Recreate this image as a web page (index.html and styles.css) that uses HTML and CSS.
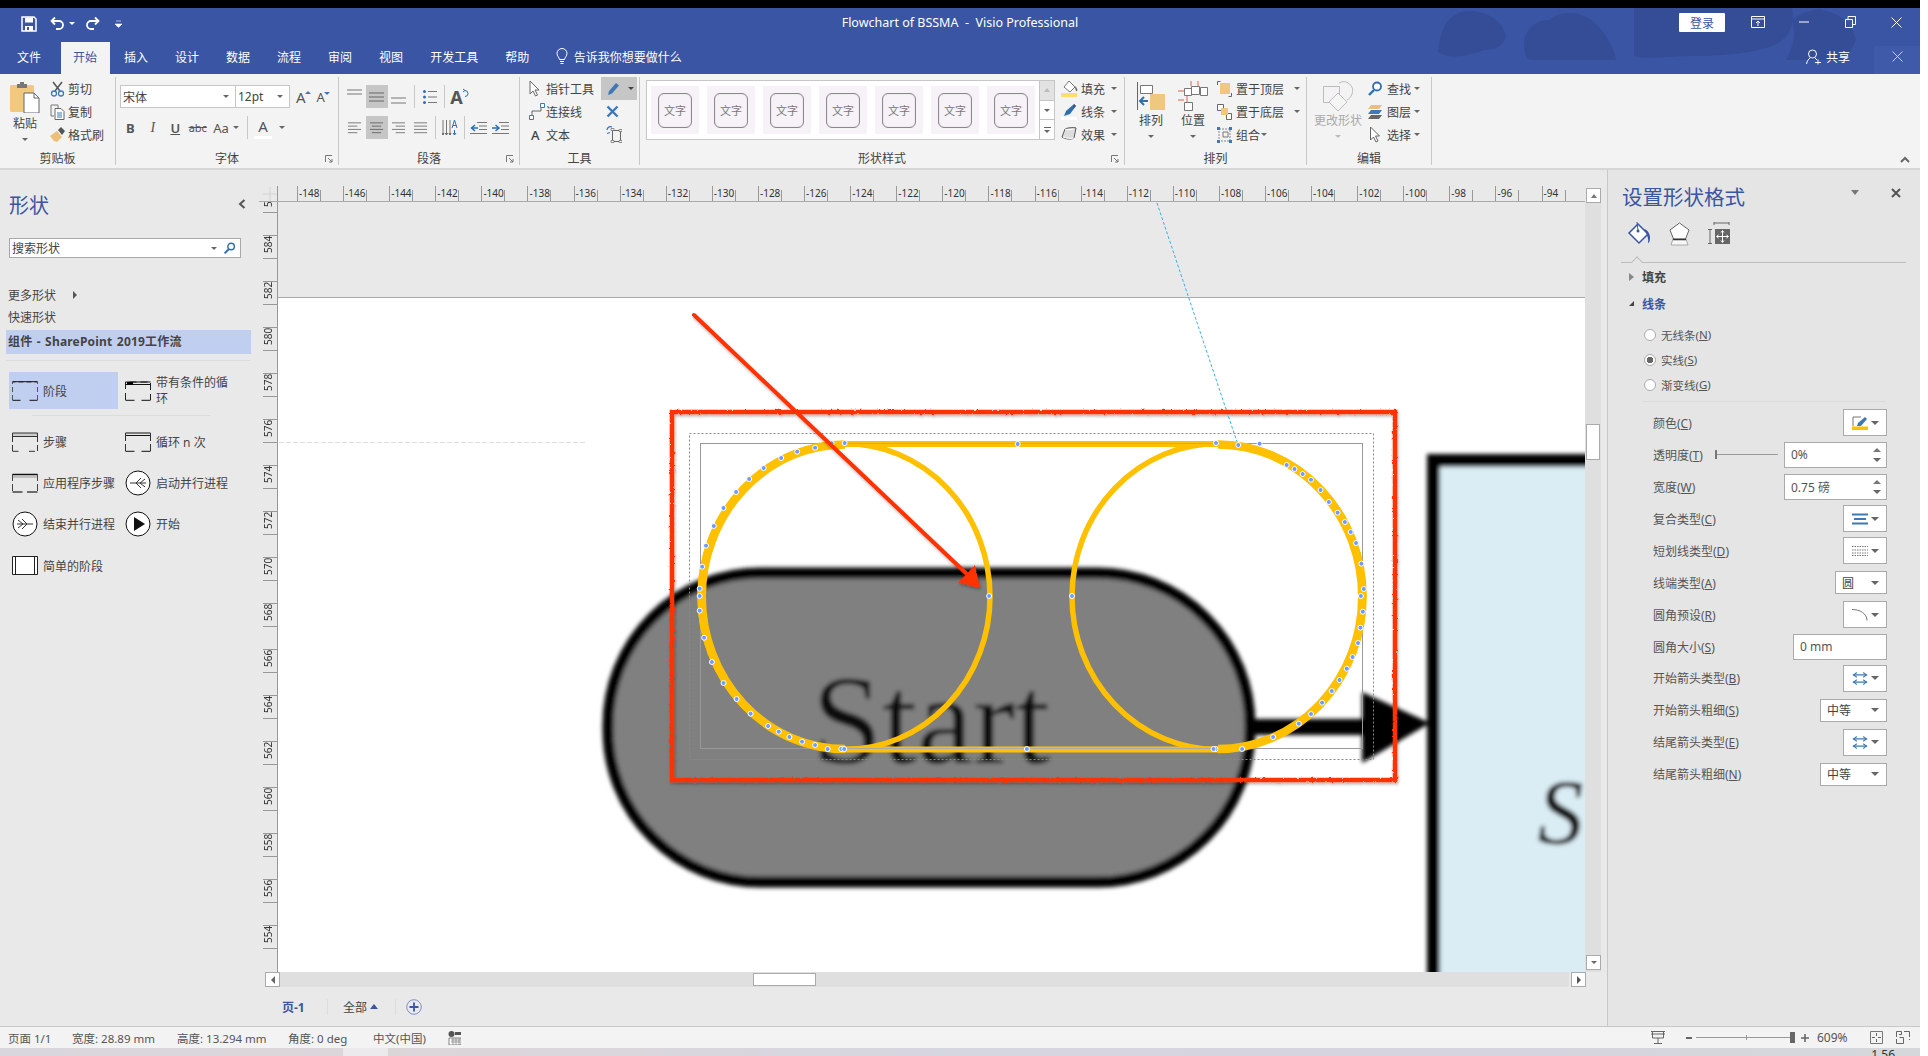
FILE: index.html
```html
<!DOCTYPE html>
<html lang="zh-CN">
<head>
    <meta charset="UTF-8">
    <title>Flowchart of BSSMA - Visio Professional</title>
    <link rel="stylesheet" href="styles.css">
</head>
<body>
<svg class="defs" width="0" height="0">
    <defs>
        <symbol id="al-left" viewBox="0 0 16 14"><path d="M1 1.500h14M1 5h10M1 8.500h14M1 12h10" stroke="#777" fill="none"/></symbol>
        <symbol id="al-center" viewBox="0 0 16 14"><path d="M1 1.500h14M3 5h10M1 8.500h14M3 12h10" stroke="#666" fill="none"/></symbol>
        <symbol id="al-right" viewBox="0 0 16 14"><path d="M1 1.500h14M5 5h10M1 8.500h14M5 12h10" stroke="#777" fill="none"/></symbol>
        <symbol id="al-just" viewBox="0 0 16 14"><path d="M1 1.500h14M1 5h14M1 8.500h14M1 12h14" stroke="#777" fill="none"/></symbol>
        <symbol id="swap" viewBox="0 0 20 18"><path d="M1 4.500h18M1 13.500h18" stroke="#3f78b5" stroke-width="1.400" fill="none"/><path d="M14 1.500l4 3-4 3M6 1.500l-4 3 4 3M14 10.500l4 3-4 3M6 10.500l-4 3 4 3" stroke="#3f78b5" stroke-width="1.400" fill="none"/></symbol>
        <symbol id="stage" viewBox="0 0 26 20"><path d="M.5 19V1h25v18" fill="none" stroke="#555" stroke-dasharray="5 3"/><path d="M.5 .7h25M.5 19.300h8M17.500 19.300h8" stroke="#111" fill="none"/></symbol>
    </defs>
</svg>

<div class="window">
    <div class="topline"></div>
    <header class="app-head">
        <svg class="clouds" width="440" height="52" viewBox="0 0 440 52">
            <path d="M0 44C2 30 4 10 24 4c18-4 40 6 44 24-2 10-10 14-22 14C30 48 12 52 0 44z"/>
            <path d="M86 38c0-14 8-26 26-26 6-8 30-12 46 4 10 10 18 24 20 36H92c-6-4-6-10-6-14z"/>
            <path d="M196 0h158c2 14 0 28-16 36-20 10-60 12-82 12-24 0-50 4-60 0 0-20 0-30 0-48z"/>
            <path d="M354 12c8-6 22-12 30-10 20 4 30 14 34 30l-10 20h-60c8-14 10-28 6-40z"/>
        </svg>
        <div class="titlebar">
            <div class="qat">
                <svg width="16" height="16" viewBox="0 0 16 16"><path d="M1 1h12l2 2v12H1z" fill="none" stroke="#fff" stroke-width="1.500"/><path d="M4 1.500h8v5H4zM4 10h8v5H4z" fill="#fff"/><path d="M6 11h2v3H6z" fill="#3955a3"/></svg>
                <svg class="qat-undo" width="15" height="15" viewBox="0 0 15 15"><path d="M2 5h7a4 4 0 0 1 0 8H6M5 1.500L1.500 5 5 8.500" fill="none" stroke="#fff" stroke-width="1.800"/></svg>
                <i class="caret white"></i>
                <svg class="qat-redo" width="15" height="15" viewBox="0 0 15 15"><path d="M13 5H6a4 4 0 0 0 0 8h3M10 1.500L13.500 5 10 8.500" fill="none" stroke="#fff" stroke-width="1.800"/></svg>
                <svg class="qat-more" width="7" height="8" viewBox="0 0 7 8"><path d="M1 1h5M0 4h7l-3.500 3.500z" fill="#fff" stroke="#fff" stroke-width=".6"/></svg>
            </div>
            <div class="doc-title">Flowchart of BSSMA&nbsp; - &nbsp;Visio Professional</div>
            <div class="win-ctrls">
                <button class="login">登录</button>
                <svg class="wc ctl-a" width="14" height="12" viewBox="0 0 14 12"><path d="M.5.500h13v11H.5zM.5 3h13M7 10V5M5 7l2-2 2 2" fill="none" stroke="#fff"/></svg>
                <svg class="wc ctl-b" width="10" height="2" viewBox="0 0 10 2"><path d="M0 1h10" stroke="#fff"/></svg>
                <svg class="wc ctl-c" width="11" height="12" viewBox="0 0 11 12"><path d="M.5 3.500h7v8h-7zM3 3V.500h7.500v8H8" fill="none" stroke="#fff"/></svg>
                <svg class="wc ctl-d" width="11" height="11" viewBox="0 0 11 11"><path d="M.5.500l10 10M10.500.500l-10 10" stroke="#fff"/></svg>
            </div>
        </div>
        <nav class="tabs">
            <span class="tab first">文件</span>
            <span class="tab active">开始</span>
            <span class="tab">插入</span>
            <span class="tab">设计</span>
            <span class="tab">数据</span>
            <span class="tab">流程</span>
            <span class="tab">审阅</span>
            <span class="tab">视图</span>
            <span class="tab">开发工具</span>
            <span class="tab">帮助</span>
            <span class="tell-me">
                <svg width="12" height="17" viewBox="0 0 12 17"><path d="M3.500 11.500C3 9 1 8 1 5.500a5 5 0 0 1 10 0c0 2.500-2 3.500-2.500 6zM4 13.500h4M4.500 15.500h3" fill="none" stroke="#fff"/></svg>
                告诉我你想要做什么
            </span>
            <span class="share">
                <svg width="15" height="16" viewBox="0 0 15 16"><circle cx="6.500" cy="5" r="4" fill="none" stroke="#fff"/><path d="M.5 15c.5-3 2-5 3.500-6M9 9l2 2M9 13.500h6M12 10.500v5" fill="none" stroke="#fff"/></svg>
                共享
            </span>
            <span class="pane-close"><svg width="11" height="11" viewBox="0 0 11 11"><path d="M.5.500l10 10M10.500.500l-10 10" stroke="#c9d0e3"/></svg></span>
        </nav>
    </header>

    <section class="ribbon">
        <div class="group g-clip">
            <div class="group-body">
                <div class="big big-paste">
                    <svg width="30" height="32" viewBox="0 0 30 32"><rect x="0" y="4" width="24" height="27" rx="1.500" fill="#f0c87e"/><path d="M7 3h10v4H7z" fill="#777"/><path d="M10 1h4v3h-4z" fill="#777"/><path d="M14 12h10l5 5v15H14z" fill="#fff" stroke="#666"/><path d="M24 12v5h5" fill="none" stroke="#666"/></svg>
                    <span>粘贴</span>
                    <i class="caret"></i>
                </div>
                <div class="col col-clip">
                    <div class="tool"><svg width="15" height="16" viewBox="0 0 15 16"><path d="M3 1l7 9M12 1l-7 9" stroke="#555" stroke-width="1.500"/><circle cx="4" cy="12.500" r="2.500" fill="none" stroke="#3f78b5" stroke-width="1.300"/><circle cx="11" cy="12.500" r="2.500" fill="none" stroke="#3f78b5" stroke-width="1.300"/></svg><span>剪切</span></div>
                    <div class="tool"><svg width="15" height="16" viewBox="0 0 15 16"><path d="M1 1h7l0 3M1 1v11h3" fill="none" stroke="#777"/><path d="M5 4.500h6l3 3v8H5z" fill="#fff" stroke="#666"/><path d="M7 9h5M7 11h5M7 13h5" stroke="#3f78b5"/></svg><span>复制</span></div>
                    <div class="tool"><svg width="15" height="16" viewBox="0 0 15 16"><path d="M0 9l7-5 5 6-5 5-3-1z" fill="#ecc078"/><path d="M8 3l3-3 4 4-3 4z" fill="#555"/></svg><span>格式刷</span></div>
                </div>
            </div>
            <div class="group-label">剪贴板</div>
        </div>

        <div class="group g-font">
            <div class="group-body stack">
                <div class="font-row">
                    <div class="combo font-name"><span>宋体</span><i class="caret"></i></div>
                    <div class="combo font-size"><span>12pt</span><i class="caret"></i></div>
                    <span class="grow-a up">A</span>
                    <span class="grow-a down">A</span>
                </div>
                <div class="font-row second">
                    <span class="tb bold">B</span>
                    <span class="tb ital">I</span>
                    <span class="tb und">U</span>
                    <span class="tb strike">abc</span>
                    <span class="tb case">Aa</span><i class="caret"></i>
                    <span class="vsep sep-font"></span>
                    <span class="font-color">A</span><i class="caret"></i>
                </div>
            </div>
            <div class="group-label">字体</div>
            <svg class="launcher" width="8" height="8" viewBox="0 0 8 8"><path d="M.5 7V.500H7M3 3l4 4M7 4v3H4" fill="none" stroke="#777"/></svg>
        </div>

        <div class="group g-para">
            <div class="group-body stack">
                <div class="para-row">
                    <span class="pb"><svg width="15" height="8" viewBox="0 0 15 8" class="nudge-up"><path d="M0 1h15M0 5h15" stroke="#777"/></svg></span>
                    <span class="pb on"><svg width="15" height="10" viewBox="0 0 15 10"><path d="M0 1h15M0 5h15M0 9h15" stroke="#666"/></svg></span>
                    <span class="pb"><svg width="15" height="8" viewBox="0 0 15 8" class="nudge-down"><path d="M0 1h15M0 6h15" stroke="#777"/></svg></span>
                    <span class="vsep"></span>
                    <span class="pb gap-s"><svg width="14" height="16" viewBox="0 0 14 16"><path d="M5 2.500h9M5 8h9M5 13.500h9" stroke="#777"/><circle cx="1.500" cy="2.500" r="1.500" fill="#2f6fb0"/><circle cx="1.500" cy="8" r="1.500" fill="#2f6fb0"/><circle cx="1.500" cy="13.500" r="1.500" fill="#2f6fb0"/></svg></span>
                    <span class="vsep"></span>
                    <span class="pb gap-s rot-a">A<svg width="7" height="10" viewBox="0 0 7 10"><path d="M1 1l2 1.500L1 4M3 2.500a3 3 0 0 1 0 6" fill="none" stroke="#2f6fb0"/></svg></span>
                </div>
                <div class="para-row second">
                    <span class="pb"><svg width="15" height="14"><use href="#al-left"/></svg></span>
                    <span class="pb on"><svg width="15" height="14"><use href="#al-center"/></svg></span>
                    <span class="pb"><svg width="15" height="14"><use href="#al-right"/></svg></span>
                    <span class="pb"><svg width="15" height="14"><use href="#al-just"/></svg></span>
                    <span class="vsep"></span>
                    <span class="pb"><svg width="16" height="18" viewBox="0 0 16 18"><path d="M1 1v14M4.500 1v14M8 1v14" stroke="#777"/><path d="M0 14l1 2 1-2M3.500 14l1 2 1-2M7 14l1 2 1-2" stroke="#555" fill="none"/><path d="M10 9l2.500-8L15 9M11 6.500h3M12.500 11v5M11 14l1.500 2 1.500-2" fill="none" stroke="#2f6fb0"/></svg></span>
                    <span class="vsep"></span>
                    <span class="pb"><svg width="17" height="14" viewBox="0 0 17 14"><path d="M7 1.500h10M9 5h8M9 8.500h8M0 12.500h17" stroke="#777"/><path d="M8 7H2M5 4L1.500 7 5 10" fill="none" stroke="#2f6fb0" stroke-width="1.500"/></svg></span>
                    <span class="pb"><svg width="17" height="14" viewBox="0 0 17 14"><path d="M7 1.500h10M9 5h8M9 8.500h8M0 12.500h17" stroke="#777"/><path d="M0 7h6M3.500 4L7 7l-3.500 3" fill="none" stroke="#2f6fb0" stroke-width="1.500"/></svg></span>
                </div>
            </div>
            <div class="group-label">段落</div>
            <svg class="launcher" width="8" height="8" viewBox="0 0 8 8"><path d="M.5 7V.500H7M3 3l4 4M7 4v3H4" fill="none" stroke="#777"/></svg>
        </div>

        <div class="group g-tools">
            <div class="group-body tools-grid">
                <div class="tool tool-w"><svg width="11" height="17" viewBox="0 0 11 17"><path d="M1 1v13l3-3 2.500 5 2-1-2.500-5h4z" fill="#fff" stroke="#666"/></svg><span>指针工具</span></div>
                <div class="pen-btn"><svg width="13" height="14" viewBox="0 0 13 14"><path d="M1 13l1-4 7-8 3 2.500-7 8z" fill="#3f78b5"/></svg><i class="caret dark"></i></div>
                <div class="tool tool-w"><svg width="16" height="17" viewBox="0 0 16 17"><path d="M3 12V8h9V4" fill="none" stroke="#666"/><path d="M.5 12.500h4v4h-4zM11.500.500h4v4h-4z" fill="#fff" stroke="#3f78b5"/></svg><span>连接线</span></div>
                <div class="mini"><svg width="13" height="13" viewBox="0 0 13 13"><path d="M1.500 1.500l10 10M11.500 1.500l-10 10" stroke="#3f78b5" stroke-width="2.400"/></svg></div>
                <div class="tool tool-w"><span class="text-a">A</span><span>文本</span></div>
                <div class="mini"><svg width="16" height="17" viewBox="0 0 16 17"><path d="M6.500 4.500h8v11h-8z" fill="none" stroke="#666"/><path d="M5 4.500h3v-2H5zM13 3.500h3v2h-3zM5 14.500h3v2H5zM13 14.500h3v2h-3z" fill="#fff" stroke="#666" stroke-width=".7"/><path d="M1 4a3.500 3.500 0 0 1 5-3M6 1L4 .3M1 7.500l3-1" fill="none" stroke="#3f78b5" stroke-width="1.300"/></svg></div>
            </div>
            <div class="group-label">工具</div>
        </div>

        <div class="group g-style">
            <div class="group-body">
                <div class="gallery">
                    <div class="tiles">
                        <div class="tile"><b>文字</b></div>
                        <div class="tile"><b>文字</b></div>
                        <div class="tile"><b>文字</b></div>
                        <div class="tile"><b>文字</b></div>
                        <div class="tile"><b>文字</b></div>
                        <div class="tile"><b>文字</b></div>
                        <div class="tile"><b>文字</b></div>
                    </div>
                    <div class="gal-scroll">
                        <span class="off"><i class="caret up-c"></i></span>
                        <span><i class="caret"></i></span>
                        <span class="last"><i class="bar"></i><i class="caret"></i></span>
                    </div>
                </div>
                <div class="col col-style">
                    <div class="tool"><svg width="17" height="17" viewBox="0 0 17 17"><path d="M8 1l6 6-5 5-6-5z" fill="#fff" stroke="#777"/><path d="M14 6c2 2 3 4 2 5s-2-2-2-5z" fill="#666"/><path d="M0 13h16v4H0z" fill="#fedc6e"/></svg><span>填充</span><i class="caret"></i></div>
                    <div class="tool"><svg width="17" height="17" viewBox="0 0 17 17"><path d="M3 13l2-5 8-7 2 2-6 8z" fill="#2f6fb0"/><path d="M13 1l2 2-3 3z" fill="#555"/><path d="M0 14h16v3H0z" fill="#fff"/></svg><span>线条</span><i class="caret"></i></div>
                    <div class="tool"><svg width="17" height="17" viewBox="0 0 17 17"><path d="M1 11l3-8c1-1 9-2 11-1l-2 10c-3 2-9 1-12-1z" fill="#ddd" stroke="#555"/><path d="M4 3c2 1 6 1 8 0M2 11c3 1 7 2 11 1" fill="none" stroke="#fff"/></svg><span>效果</span><i class="caret"></i></div>
                </div>
            </div>
            <div class="group-label">形状样式</div>
            <svg class="launcher" width="8" height="8" viewBox="0 0 8 8"><path d="M.5 7V.500H7M3 3l4 4M7 4v3H4" fill="none" stroke="#777"/></svg>
        </div>

        <div class="group g-arrange">
            <div class="group-body">
                <div class="big big-order">
                    <svg width="28" height="30" viewBox="0 0 28 30"><path d="M.5 1v28" stroke="#666"/><path d="M3.500 4.500h12v8h-12z" fill="#fff" stroke="#777"/><path d="M13 13h15v16H13z" fill="#efc77f"/><path d="M11 20H4M7 16l-4 4 4 4" fill="none" stroke="#2f6fb0" stroke-width="2"/></svg>
                    <span>排列</span>
                    <i class="caret"></i>
                </div>
                <div class="big big-place">
                    <svg width="30" height="30" viewBox="0 0 30 30"><path d="M13.500 5.500h8v8h-8zM22.500 6.500h7v8h-7zM6.500 7.500h7v7h-7zM6.500 21.500h8v8h-8z" fill="#fff" stroke="#777"/><path d="M13 0v5M20 0v5M0 10h6M0 19h6M9 15v6" stroke="#d9664a"/></svg>
                    <span>位置</span>
                    <i class="caret"></i>
                </div>
                <div class="col col-arrange">
                    <div class="tool"><svg width="15" height="16" viewBox="0 0 15 16"><path d="M.5 4V.500h3M14.500 12v3.500h-3" fill="none" stroke="#666"/><path d="M3 2h10v11H3z" fill="#efc77f"/></svg><span>置于顶层</span><i class="caret"></i></div>
                    <div class="tool"><svg width="15" height="16" viewBox="0 0 15 16"><path d="M.5.500h6v6h-6zM9.500 9.500h5v6h-5z" fill="#fff" stroke="#666"/><path d="M4 4h7v7H4z" fill="#efc77f"/></svg><span>置于底层</span><i class="caret"></i></div>
                    <div class="tool t-group"><svg width="15" height="16" viewBox="0 0 15 16"><path d="M2 2h11v12H2z" fill="none" stroke="#888" stroke-dasharray="2 1"/><path d="M6 5h5v5H6z" fill="none" stroke="#777"/><path d="M0 0h3v3H0zM12 0h3v3h-3zM0 13h3v3H0zM12 13h3v3h-3z" fill="#3f78b5"/></svg><span>组合</span><i class="caret"></i></div>
                </div>
            </div>
            <div class="group-label">排列</div>
        </div>

        <div class="group g-edit">
            <div class="group-body">
                <div class="big big-change">
                    <svg width="30" height="30" viewBox="0 0 30 30"><path d="M.5 5.500h16v16H.5z" fill="#f5f2f5" stroke="#bbb"/><path d="M16 2a9 9 0 0 1 13 11c-1 3-3 5-5 6" fill="none" stroke="#bbb"/><path d="M15 12l9 9-9 9-9-9z" fill="#f5f5f5" stroke="#bbb"/></svg>
                    <span>更改形状</span>
                    <i class="caret pale"></i>
                </div>
                <div class="col col-edit">
                    <div class="tool"><svg width="14" height="16" viewBox="0 0 14 16"><circle cx="9" cy="5.500" r="4" fill="#fff" stroke="#2f6fb0" stroke-width="1.800"/><path d="M6 9l-5 5" stroke="#2f6fb0" stroke-width="2.400"/></svg><span>查找</span><i class="caret"></i></div>
                    <div class="tool"><svg width="14" height="16" viewBox="0 0 14 16"><path d="M3 1h11l-3 4H0z" fill="#e9c07a"/><path d="M3 6h11l-3 4H0z" fill="#3f78b5"/><path d="M3 11h11l-3 4H0z" fill="#666"/></svg><span>图层</span><i class="caret"></i></div>
                    <div class="tool"><svg width="14" height="17" viewBox="0 0 11 17"><path d="M1 1v13l3-3 2.500 5 2-1-2.500-5h4z" fill="#fff" stroke="#666"/></svg><span>选择</span><i class="caret"></i></div>
                </div>
            </div>
            <div class="group-label">编辑</div>
        </div>

        <svg class="collapse" width="10" height="7" viewBox="0 0 10 7"><path d="M1 6l4-4 4 4" fill="none" stroke="#666" stroke-width="2"/></svg>
    </section>

    <main class="main">
        <aside class="shapes">
            <div class="shapes-head">
                <h2>形状</h2>
                <svg width="8" height="10" viewBox="0 0 8 10"><path d="M6.500 1L2 5l4.500 4" fill="none" stroke="#555" stroke-width="2"/></svg>
            </div>
            <div class="search">
                <span>搜索形状</span>
                <i class="caret"></i>
                <svg width="13" height="13" viewBox="0 0 14 16"><circle cx="9" cy="5.500" r="4" fill="#fff" stroke="#2f6fb0" stroke-width="1.800"/><path d="M6 9l-5 5" stroke="#2f6fb0" stroke-width="2.400"/></svg>
            </div>
            <div class="more">更多形状<i class="arrow-r"></i></div>
            <div class="quick">快速形状</div>
            <div class="stencil">组件 - SharePoint 2019工作流</div>
            <div class="rule"></div>
            <div class="masters first-row">
                <div class="master selected"><svg width="26" height="20"><use href="#stage"/></svg><span>阶段</span></div>
                <div class="master"><svg width="26" height="20" viewBox="0 0 26 20"><path d="M.5 19V1h25v18" fill="none" stroke="#222" stroke-dasharray="7 4"/><path d="M.5 1h25M.5 3.500h25M.5 19.300h9M16.500 19.300h9" stroke="#111" fill="none"/><path d="M2 1h6v2.500H2z"/></svg><span class="two-line">带有条件的循环</span></div>
            </div>
            <div class="rule short"></div>
            <div class="masters">
                <div class="master"><svg width="26" height="20" viewBox="0 0 26 20"><path d="M.5 1h25v3.500H.5z" fill="#ccc" stroke="#333"/><path d="M.5 4v15M25.500 4v15M.5 19.300h8M17 19.300h8.500" fill="none" stroke="#333" stroke-dasharray="6 3"/></svg><span>步骤</span></div>
                <div class="master"><svg width="26" height="20" viewBox="0 0 26 20"><path d="M.5 1h25M.5 3.500h25" stroke="#111"/><path d="M.5 1v18M25.500 1v18" stroke="#333" stroke-dasharray="8 3"/><path d="M.5 19.300h9M16.500 19.300h9" stroke="#111"/></svg><span>循环 n 次</span></div>
                <div class="master"><svg width="26" height="20" viewBox="0 0 26 20"><path d="M.5 1.500h25" stroke="#111" stroke-width="1.500"/><path d="M.5 4h25" stroke="#999"/><path d="M.5 1v18M25.500 1v18" stroke="#444" stroke-dasharray="7 3"/><path d="M.5 19h10M15 19h10.500" stroke="#444" stroke-width="1.500"/></svg><span>应用程序步骤</span></div>
                <div class="master"><svg width="26" height="26" viewBox="0 0 26 26"><circle cx="13" cy="13" r="12" fill="#fff" stroke="#111"/><path d="M5 13h16M11 13l5-5M11 13l5 5M15 13l5-4M15 13l5 4" stroke="#333" fill="none"/></svg><span>启动并行进程</span></div>
                <div class="master"><svg width="26" height="26" viewBox="0 0 26 26"><circle cx="13" cy="13" r="12" fill="#fff" stroke="#111"/><path d="M5 13h16M15 13l-5-5M15 13l-5 5M11 13l-5-4M11 13l-5 4" stroke="#333" fill="none"/></svg><span>结束并行进程</span></div>
                <div class="master"><svg width="26" height="26" viewBox="0 0 26 26"><circle cx="13" cy="13" r="12" fill="#fff" stroke="#111"/><path d="M9 6l11 7-11 7z" fill="#111"/></svg><span>开始</span></div>
                <div class="master"><svg width="26" height="20" viewBox="0 0 26 20"><path d="M.5.500h25v18H.5z" fill="#fff" stroke="#222"/><path d="M3.500.500v18M22.500.500v18" stroke="#222" fill="none"/></svg><span>简单的阶段</span></div>
            </div>
        </aside>

        <section class="workarea">
            <div class="top-gap"></div>
            <div class="ruler-corner"><svg width="16" height="16" viewBox="0 0 16 16"><path d="M8 1v14M1 8h14" stroke="#d4d4d4"/></svg></div>
            <div class="h-ruler">
                <span>-148</span><span>-146</span><span>-144</span><span>-142</span><span>-140</span><span>-138</span><span>-136</span>
                <span>-134</span><span>-132</span><span>-130</span><span>-128</span><span>-126</span><span>-124</span><span>-122</span>
                <span>-120</span><span>-118</span><span>-116</span><span>-114</span><span>-112</span><span>-110</span><span>-108</span>
                <span>-106</span><span>-104</span><span>-102</span><span>-100</span><span>-98</span><span>-96</span><span>-94</span>
            </div>
            <div class="v-scroll">
                <span class="sb-btn"><i class="caret up-c"></i></span>
                <span class="v-thumb"></span>
                <span class="sb-btn"><i class="caret"></i></span>
            </div>
            <div class="v-ruler">
                <span><b>586</b></span><span><b>584</b></span><span><b>582</b></span><span><b>580</b></span><span><b>578</b></span><span><b>576</b></span>
                <span><b>574</b></span><span><b>572</b></span><span><b>570</b></span><span><b>568</b></span><span><b>566</b></span><span><b>564</b></span>
                <span><b>562</b></span><span><b>560</b></span><span><b>558</b></span><span><b>556</b></span><span><b>554</b></span>
            </div>
            <div class="canvas">
                <svg width="1307" height="770" viewBox="278 202 1307 770">
                    <defs>
                        <filter id="soft" x="-5%" y="-5%" width="110%" height="110%"><feGaussianBlur stdDeviation="2.300"/></filter>
                        <filter id="rough" x="-5%" y="-5%" width="110%" height="110%">
                            <feTurbulence type="fractalNoise" baseFrequency=".35" numOctaves="2" seed="4"/>
                            <feDisplacementMap in="SourceGraphic" scale="2.500"/>
                            <feGaussianBlur stdDeviation=".4"/>
                            <feDropShadow dx="1" dy="2" stdDeviation="1.500" flood-color="#000" flood-opacity=".3"/>
                        </filter>
                    </defs>
                    <rect x="278" y="202" width="1307" height="95" fill="#e9e9e9"/>
                    <path d="M278 297.500h1307" stroke="#a9a9b0"/>
                    <path d="M279 442.500h307" stroke="#ddd" stroke-dasharray="5 2"/>

                    <g filter="url(#soft)">
                        <rect x="608" y="573" width="642" height="309" rx="152" fill="#808080" stroke="#000" stroke-width="11"/>
                        <text x="812" y="763" class="start-text">Start</text>
                        <rect x="1433.500" y="460.500" width="240" height="600" fill="#daedf4" stroke="#000" stroke-width="13"/>
                        <text x="1538" y="843" class="s-text">S</text>
                        <path d="M1252 727h116" stroke="#000" stroke-width="16"/>
                        <path d="M1362 692l68 31-68 40z"/>
                    </g>

                    <rect x="689.500" y="433.500" width="684" height="326" fill="none" stroke="#888" stroke-dasharray="2 2"/>
                    <rect x="700.500" y="443.500" width="662" height="305" fill="none" stroke="#999"/>
                    <path d="M1157 203L1238 445" stroke="#33b0f0" stroke-dasharray="3 2" fill="none"/>

                    <g fill="none" stroke="#ffc000">
                        <ellipse cx="845" cy="596.500" rx="145" ry="153" stroke-width="5.500"/>
                        <ellipse cx="1218" cy="596.500" rx="146" ry="153" stroke-width="5.500"/>
                        <path d="M845 444h373M845 749.500h373" stroke-width="6"/>
                        <path d="M845 444.500A143 152 0 0 0 845 749M1218 444.500A144 152 0 0 1 1218 749" stroke-width="8.500"/>
                    </g>
                    <path d="M845 443.500h373M845 748.500h373" stroke="#aaa" stroke-width="1"/>

                    <g class="handles">
                        <circle cx="815.100" cy="447.700" r="2.500"/><circle cx="797.200" cy="451.700" r="2.500"/><circle cx="781.200" cy="458" r="2.500"/><circle cx="763.700" cy="468" r="2.500"/><circle cx="749.200" cy="479" r="2.500"/><circle cx="736.100" cy="492" r="2.500"/><circle cx="723.500" cy="508" r="2.500"/><circle cx="713.800" cy="526" r="2.500"/><circle cx="706" cy="545.700" r="2.500"/><circle cx="702.200" cy="566.700" r="2.500"/><circle cx="699.700" cy="588.700" r="2.500"/><circle cx="699.700" cy="596" r="2.500"/><circle cx="699.700" cy="610.700" r="2.500"/><circle cx="704.100" cy="637.700" r="2.500"/><circle cx="711.900" cy="662" r="2.500"/><circle cx="723.500" cy="683" r="2.500"/><circle cx="736.600" cy="699" r="2.500"/><circle cx="750.600" cy="713.700" r="2.500"/><circle cx="768.100" cy="726" r="2.500"/><circle cx="778.800" cy="731.700" r="2.500"/><circle cx="789.400" cy="737" r="2.500"/><circle cx="802" cy="741.700" r="2.500"/><circle cx="815.100" cy="745" r="2.500"/><circle cx="827.700" cy="749" r="2.500"/><circle cx="841.300" cy="749" r="2.500"/><circle cx="844.200" cy="749" r="2.500"/>
                        <circle cx="831.600" cy="443.300" r="2.500"/><circle cx="844.700" cy="443" r="2.500"/><circle cx="1017.700" cy="444" r="2.500"/><circle cx="1216" cy="443" r="2.500"/><circle cx="1238.300" cy="445" r="2.500"/><circle cx="1259.600" cy="443.700" r="2.500"/><circle cx="1286.700" cy="465" r="2.500"/><circle cx="1294.500" cy="469" r="2.500"/><circle cx="1302.700" cy="474" r="2.500"/><circle cx="1311" cy="479.700" r="2.500"/><circle cx="1320.600" cy="490" r="2.500"/><circle cx="1328.900" cy="502" r="2.500"/><circle cx="1337.600" cy="512.700" r="2.500"/><circle cx="1344.900" cy="522" r="2.500"/><circle cx="1350.700" cy="532" r="2.500"/><circle cx="1356" cy="543" r="2.500"/><circle cx="1361.400" cy="563.700" r="2.500"/><circle cx="1363.800" cy="589" r="2.500"/><circle cx="1360.900" cy="596" r="2.500"/><circle cx="1362.800" cy="611.700" r="2.500"/><circle cx="1360.400" cy="627.700" r="2.500"/><circle cx="1358" cy="643" r="2.500"/><circle cx="1352.600" cy="657" r="2.500"/><circle cx="1346.800" cy="668.700" r="2.500"/><circle cx="1339.500" cy="680" r="2.500"/><circle cx="1331.800" cy="691" r="2.500"/><circle cx="1322.100" cy="702.700" r="2.500"/><circle cx="1311" cy="714" r="2.500"/><circle cx="1298.800" cy="723.700" r="2.500"/><circle cx="1273.100" cy="737" r="2.500"/><circle cx="1242.100" cy="749" r="2.500"/><circle cx="1215.500" cy="749" r="2.500"/><circle cx="1213.500" cy="749" r="2.500"/><circle cx="1026.900" cy="749" r="2.500"/><circle cx="989.100" cy="596" r="2.500"/><circle cx="1072" cy="596" r="2.500"/>
                    </g>

                    <g filter="url(#rough)">
                        <rect x="672" y="412" width="723" height="368" fill="none" stroke="#ff3000" stroke-width="4.500"/>
                        <path d="M694 315L970 577" stroke="#ff3000" stroke-width="4" stroke-linecap="round"/>
                        <path d="M975 565l-17 18 22 5z" fill="#ff3000"/>
                    </g>
                </svg>
            </div>
            <div class="h-scroll">
                <span class="sb-btn"><i class="arrow-l"></i></span>
                <span class="h-track"><span class="h-thumb"></span></span>
                <span class="sb-btn right"><i class="arrow-r"></i></span>
            </div>
            <div class="pages">
                <span class="page-name">页-1</span>
                <span class="page-sep"></span>
                <span class="page-all">全部<i class="tri-up"></i></span>
                <span class="page-sep"></span>
                <svg class="page-add" width="16" height="16" viewBox="0 0 16 16"><circle cx="8" cy="8" r="7.300" fill="none" stroke="#7d8fc7"/><path d="M8 3.500v9M3.500 8h9" stroke="#3955a3" stroke-width="1.800"/></svg>
            </div>
        </section>

        <aside class="format">
            <div class="format-head">
                <h2>设置形状格式</h2>
                <i class="caret big-c"></i>
                <svg width="10" height="10" viewBox="0 0 10 10"><path d="M1 1l8 8M9 1L1 9" stroke="#555" stroke-width="2"/></svg>
            </div>
            <div class="format-icons">
                <svg width="24" height="24" viewBox="0 0 24 24"><path d="M11 2l10 10-9 9-10-10z" fill="#fff" stroke="#3955a3" stroke-width="1.500"/><path d="M10 0l1 8" stroke="#3955a3"/><circle cx="11" cy="9" r="1.500" fill="#3955a3"/><path d="M17 7c4 1 6 5 6 9 0 3-1 5-2 5 1-4-1-9-4-14z" fill="#3955a3"/></svg>
                <svg width="21" height="24" viewBox="0 0 21 24"><path d="M10.500 1L20 8l-3.500 9h-12L1 8z" fill="#fff" stroke="#666"/><path d="M4 17l-2 6h17l-2-6" fill="#f7f7f7" stroke="#aaa"/><path d="M4 17.500h13" stroke="#333" stroke-width="1.500"/></svg>
                <svg width="22" height="24" viewBox="0 0 22 24"><path d="M6 1h15M6 0v3M21 0v3M0 7.500h4M0 21.500h4M2 8v13" stroke="#666" fill="none"/><path d="M7 7h15v15H7z" fill="#666"/><path d="M14.500 9v11M9 14.500h11M13 10.500l1.500-2 1.500 2M13 18.500l1.500 2 1.500-2M10.500 13l-2 1.500 2 1.500M18.500 13l2 1.500-2 1.500" fill="none" stroke="#fff"/></svg>
            </div>
            <div class="format-rule"><i></i></div>
            <div class="section-row"><i class="tri-closed"></i><b>填充</b></div>
            <div class="section-row open"><i class="tri-open"></i><b>线条</b></div>
            <div class="radios">
                <label class="radio"><i></i>无线条(<u>N</u>)</label>
                <label class="radio checked"><i></i>实线(<u>S</u>)</label>
                <label class="radio"><i></i>渐变线(<u>G</u>)</label>
            </div>
            <div class="radio-rule"></div>
            <div class="props">
                <div class="prop"><span>颜色(<u>C</u>)</span><div class="pick"><svg width="17" height="14" viewBox="0 0 17 14"><path d="M9 1H1v9" fill="none" stroke="#777"/><path d="M5 10l1-3 7-6 2 2-6 7z" fill="#3f78b5"/><path d="M0 10.500h16V14H0z" fill="#ffc000"/></svg><i class="caret"></i></div></div>
                <div class="prop"><span>透明度(<u>T</u>)</span><div class="slider"><i></i></div><div class="spin w-spin"><em>0%</em><span class="spin-btns"><i class="caret up-c"></i><i class="caret"></i></span></div></div>
                <div class="prop"><span>宽度(<u>W</u>)</span><div class="spin w-spin"><em>0.75 磅</em><span class="spin-btns"><i class="caret up-c"></i><i class="caret"></i></span></div></div>
                <div class="prop"><span>复合类型(<u>C</u>)</span><div class="pick"><svg width="16" height="12" viewBox="0 0 16 12"><path d="M0 1.500h16M2 6h12M0 10.500h16" stroke="#3f78b5" stroke-width="1.800"/></svg><i class="caret"></i></div></div>
                <div class="prop"><span>短划线类型(<u>D</u>)</span><div class="pick"><svg width="16" height="10" viewBox="0 0 16 10"><path d="M0 .500h16M0 4h16M0 7h16M0 9.500h16" stroke="#777" stroke-dasharray="1.500 1"/></svg><i class="caret"></i></div></div>
                <div class="prop"><span>线端类型(<u>A</u>)</span><div class="combo-sm narrow"><em>圆</em><i class="caret"></i></div></div>
                <div class="prop"><span>圆角预设(<u>R</u>)</span><div class="pick"><svg width="16" height="12" viewBox="0 0 16 12"><path d="M0 .500c8 0 15 4 15 11" fill="none" stroke="#777"/></svg><i class="caret"></i></div></div>
                <div class="prop"><span>圆角大小(<u>S</u>)</span><div class="spin w-radius"><em>0 mm</em></div></div>
                <div class="prop"><span>开始箭头类型(<u>B</u>)</span><div class="pick"><svg width="16" height="15"><use href="#swap"/></svg><i class="caret"></i></div></div>
                <div class="prop"><span>开始箭头粗细(<u>S</u>)</span><div class="combo-sm"><em>中等</em><i class="caret"></i></div></div>
                <div class="prop"><span>结尾箭头类型(<u>E</u>)</span><div class="pick"><svg width="16" height="15"><use href="#swap"/></svg><i class="caret"></i></div></div>
                <div class="prop"><span>结尾箭头粗细(<u>N</u>)</span><div class="combo-sm"><em>中等</em><i class="caret"></i></div></div>
            </div>
        </aside>
    </main>

    <footer class="status">
        <span class="st-page">页面 1/1</span>
        <span class="st-w">宽度: 28.89 mm</span>
        <span class="st-h">高度: 13.294 mm</span>
        <span class="st-a">角度: 0 deg</span>
        <span class="st-l">中文(中国)</span>
        <svg class="st-macro" width="13" height="14" viewBox="0 0 13 14"><circle cx="3.500" cy="3" r="3" fill="#555"/><path d="M7 1h6v3H7z" fill="#555"/><path d="M1 7h12v7H1z" fill="#fff" stroke="#666" stroke-width=".8"/><path d="M3 9h9M3 11h9M5 7v7M8 7v7M11 7v7" stroke="#777" stroke-width=".7"/></svg>
        <span class="st-right">
            <svg width="14" height="13" viewBox="0 0 14 13"><path d="M0 .500h14M1.500 1v6h11V1M0 3h14M7 7v5M3 12.500h8" fill="none" stroke="#666"/></svg>
            <i class="zoom-minus"></i>
            <span class="zoom-track"><i class="zoom-tick"></i><i class="zoom-thumb"></i></span>
            <svg width="8" height="8" viewBox="0 0 8 8"><path d="M4 0v8M0 4h8" stroke="#666" stroke-width="1.600"/></svg>
            <span class="zoom-val">609%</span>
            <svg class="st-fit" width="13" height="13" viewBox="0 0 13 13"><path d="M.5.500h12v12H.5z" fill="none" stroke="#777"/><path d="M6.500 2v3M6.500 8v3M2 6.500h3M8 6.500h3" stroke="#666"/></svg>
            <svg class="st-pan" width="14" height="13" viewBox="0 0 14 13"><path d="M.5 6V.500h5v3H3M.5 8v4.500h7v-6h-4M8 .500h5.500V6M13.500 8v1" fill="none" stroke="#666"/></svg>
        </span>
    </footer>
    <div class="desktop-strip"><span class="strip-gap"></span><span class="strip-text">1.56</span></div>
</div>
</body>
</html>
```
FILE: styles.css
```css
* {
    box-sizing: border-box;
}
html, body {
    margin: 0;
    padding: 0;
    background: #fff;
    overflow: hidden;
}
body {
    font-family: "Noto Sans", "Noto Sans CJK SC", sans-serif;
    font-size: 12px;
    color: #444;
}
i, em {
    font-style: normal;
}
h2 {
    margin: 0;
    font-weight: 400;
}
svg {
    display: block;
    flex: none;
}
.defs {
    position: absolute;
}
.window {
    width: 1920px;
    height: 1056px;
    display: flex;
    flex-direction: column;
}
.topline {
    height: 8px;
    background: #000;
}

/* caret is used everywhere */
.caret {
    display: inline-block;
    flex: none;
    width: 0;
    height: 0;
    border-left: 3px solid transparent;
    border-right: 3px solid transparent;
    border-top: 3px solid #666;
}
.caret.white { border-top-color: #fff; }
.caret.dark { border-top-color: #444; }
.caret.pale { border-top-color: #bbb; }
.caret.up-c {
    border-top: 0;
    border-bottom: 4px solid #777;
}

/* title + tabs */
.app-head {
    position: relative;
    height: 66px;
    background: #3955a3;
    color: #fff;
}
.clouds {
    position: absolute;
    left: 1438px;
    top: 0;
    fill: #344d96;
}
.titlebar {
    position: relative;
    display: grid;
    grid-template-columns: 1fr auto 1fr;
    align-items: center;
    height: 36px;
}
.qat {
    display: flex;
    align-items: center;
    padding: 0 0 5px 21px;
}
.qat-undo { margin-left: 13px; }
.qat .caret { margin-left: 4px; }
.qat-redo { margin-left: 10px; }
.qat-more { margin-left: 15px; }
.doc-title {
    font-family: "Noto Sans", sans-serif;
    font-size: 12.500px;
    padding-bottom: 7px;
}
.win-ctrls {
    display: flex;
    align-items: center;
    justify-content: flex-end;
    padding-bottom: 8px;
}
.login {
    width: 46px;
    height: 19px;
    margin-right: 26px;
    padding: 0;
    border: 0;
    border-radius: 1px;
    background: #fff;
    color: #3955a3;
    font: 12px "Noto Sans CJK SC", sans-serif;
}
.ctl-b { margin-left: 34px; }
.ctl-c { margin-left: 36px; }
.ctl-d { margin: 0 18px 0 35px; }
.tabs {
    position: relative;
    display: flex;
    align-items: stretch;
    height: 30px;
    font-size: 12px;
}
.tab {
    display: flex;
    align-items: center;
    padding: 0 12.500px 5px;
    margin-right: 2px;
}
.tab.first {
    margin-left: 4.500px;
    margin-right: 7px;
}
.tab.active {
    margin-top: -2px;
    padding-bottom: 3px;
    background: #f3f3f3;
    color: #3955a3;
}
.tell-me {
    display: flex;
    align-items: center;
    gap: 6px;
    margin-left: 12px;
    padding-bottom: 5px;
}
.share {
    display: flex;
    align-items: center;
    gap: 5px;
    margin-left: auto;
    margin-right: 24px;
    padding-bottom: 5px;
}
.pane-close {
    display: flex;
    align-items: center;
    justify-content: center;
    width: 46px;
    margin-top: 2px;
    padding-bottom: 7px;
    background: #3e5aa8;
}

/* ribbon */
.ribbon {
    position: relative;
    display: flex;
    height: 96px;
    padding-top: 3px;
    background: #f3f3f3;
    border-bottom: 2px solid #d6d6d6;
}
.group {
    position: relative;
    display: flex;
    flex-direction: column;
    height: 88px;
    border-right: 1px solid #c8c8c8;
}
.group-body {
    display: flex;
    height: 74px;
}
.group-body.stack {
    flex-direction: column;
}
.group-label {
    margin-top: 1px;
    text-align: center;
    line-height: 13px;
    font-size: 12px;
    color: #444;
}
.launcher {
    position: absolute;
    right: 5px;
    bottom: 2px;
}
.collapse {
    position: absolute;
    left: 1900px;
    bottom: 5px;
}
.g-clip { width: 116px; }
.g-font { width: 223px; }
.g-para { width: 181px; }
.g-tools { width: 120px; }
.g-style { width: 485px; }
.g-arrange { width: 182px; }
.g-edit { width: 125px; }

.col {
    display: flex;
    flex-direction: column;
}
.tool {
    display: flex;
    align-items: center;
    height: 23px;
    white-space: nowrap;
}
.big {
    display: flex;
    flex-direction: column;
    align-items: center;
}
.big span {
    margin-top: 3px;
    line-height: 18px;
}
.big .caret {
    margin-top: 5px;
}
.big-paste {
    width: 30px;
    margin-left: 10px;
    padding-top: 4px;
}
.big-paste span { margin-top: 2px; }
.col-clip { margin-left: 10px; }
.col-clip .tool { gap: 3px; }

.font-row {
    display: flex;
    align-items: center;
    height: 23px;
    margin: 8px 0 0 4px;
}
.font-row.second {
    margin-top: 8px;
    margin-left: 3px;
}
.combo {
    display: flex;
    align-items: center;
    justify-content: space-between;
    height: 23px;
    padding: 0 6px 0 2px;
    background: #fff;
    border: 1px solid #c6c6c6;
}
.font-name { width: 116px; }
.font-size { width: 55px; margin-left: -1px; }
.grow-a {
    position: relative;
    font-size: 15px;
    color: #555;
}
.grow-a.up { margin-left: 6px; }
.grow-a.down { margin-left: 11px; font-size: 13px; }
.grow-a::after {
    content: "";
    position: absolute;
    right: -5px;
    top: 4px;
    border-left: 3px solid transparent;
    border-right: 3px solid transparent;
}
.grow-a.up::after { border-bottom: 3px solid #3f78b5; }
.grow-a.down::after { border-top: 3px solid #3f78b5; }
.tb {
    width: 22.500px;
    text-align: center;
    font-size: 13px;
    color: #555;
}
.tb.bold { font-weight: 700; }
.tb.ital { font-style: italic; font-family: "Liberation Serif", serif; font-size: 14px; }
.tb.und { text-decoration: underline; font-weight: 600; }
.tb.strike { text-decoration: line-through; font-size: 11px; }
.tb.case { font-size: 13px; width: 24px; }
.vsep {
    width: 1px;
    height: 23px;
    flex: none;
    background: #c8c8c8;
}
.sep-font { margin: 0 6px 0 8px; }
.font-color {
    width: 18px;
    margin-right: 7px;
    text-align: center;
    font-size: 15px;
    line-height: 20px;
    color: #555;
    border-bottom: 3px solid #fff;
}

.para-row {
    display: flex;
    align-items: center;
    height: 23px;
    margin: 8px 0 0 4.500px;
}
.para-row.second {
    margin-top: 8px;
}
.para-row .vsep {
    margin: 0 3px;
}
.para-row .pb:nth-child(3) + .vsep { margin-left: 4px; }
.pb {
    display: flex;
    align-items: center;
    justify-content: center;
    width: 22px;
    height: 23px;
    flex: none;
}
.pb.on { background: #c6c6c6; }
.pb.gap-s { margin-left: 1px; }
.nudge-up { margin-bottom: 8px; }
.nudge-down { margin-top: 8px; }
.rot-a {
    font-size: 18px;
    font-weight: 700;
    color: #555;
}
.rot-a svg { margin: -8px 0 0 -1px; }

.tools-grid {
    display: grid;
    grid-template-columns: 81px 36px;
    grid-auto-rows: 23px;
}
.tool-w {
    position: relative;
    padding-left: 6px;
}
.tool-w svg { margin: 0 auto 0 3px; }
.text-a {
    width: 20px;
    padding-left: 5px;
    font-size: 13px;
    font-weight: 500;
}
.tool-w span:last-child { position: absolute; left: 26px; }
.pen-btn {
    display: flex;
    align-items: center;
    gap: 8px;
    padding-left: 6px;
    background: #c6c6c6;
}
.mini {
    display: flex;
    align-items: center;
    padding-left: 5px;
}

.gallery {
    display: flex;
    justify-content: space-between;
    width: 409px;
    height: 60px;
    margin: 3px 0 0 6px;
    background: #fff;
    border: 1px solid #c6c6c6;
}
.tiles {
    display: flex;
    gap: 8px;
    padding: 5px 0 0 4px;
}
.tile {
    display: flex;
    align-items: center;
    justify-content: center;
    width: 48px;
    height: 48px;
    background: #f6f2f7;
}
.tile b {
    display: flex;
    align-items: center;
    justify-content: center;
    width: 34px;
    height: 35px;
    border: 1px solid #8a8a8a;
    border-radius: 6px;
    box-shadow: inset 0 0 1px #aaa;
    font-weight: 400;
    font-size: 11px;
    color: #777;
}
.gal-scroll {
    display: flex;
    flex-direction: column;
    width: 15px;
    border-left: 1px solid #c6c6c6;
}
.gal-scroll span {
    display: flex;
    flex: 1;
    flex-direction: column;
    align-items: center;
    justify-content: center;
    gap: 2px;
    border-bottom: 1px solid #c6c6c6;
}
.gal-scroll span.last { border-bottom: 0; }
.gal-scroll .off { background: #e2e2e2; }
.gal-scroll .off .caret { border-bottom-color: #bbb; }
.gal-scroll .bar {
    width: 7px;
    height: 1px;
    background: #666;
}
.col-style { margin-left: 6px; }
.col-style .tool { gap: 3px; }
.col-style .caret { margin-left: 3px; }

.big-order {
    width: 52px;
    padding-top: 4px;
}
.big-place {
    width: 32px;
    padding-top: 4px;
}
.big-order span, .big-place span { margin-top: 1px; }
.col-arrange { margin-left: 8px; }
.col-arrange .tool { gap: 4px; }
.col-arrange .caret { margin-left: 6px; }
.col-arrange .t-group .caret { margin-left: -3px; }
.big-change {
    width: 48px;
    margin-left: 7px;
    padding-top: 4px;
    color: #aaa;
}
.big-change span {
    margin-top: 1px;
    white-space: nowrap;
}
.col-edit { margin-left: 6px; }
.col-edit .tool { gap: 5px; }
.col-edit .caret { margin-left: -2px; }

/* main */
.main {
    display: flex;
    height: 856px;
}

/* shapes pane */
.shapes {
    width: 259px;
    flex: none;
    background: #e9e9e9;
}
.shapes-head {
    display: flex;
    align-items: center;
    justify-content: space-between;
    height: 51px;
    padding: 17px 13px 0 9px;
}
.shapes-head h2 {
    font-size: 20px;
    color: #3955a3;
}
.search {
    display: flex;
    align-items: center;
    width: 232px;
    height: 20px;
    margin: 17px 0 0 9px;
    padding: 0 4px 0 2px;
    background: #fff;
    border: 1px solid #a8a8a8;
}
.search span { flex: 1; }
.search svg { margin-left: 6px; }
.more, .quick {
    display: flex;
    align-items: center;
    height: 22px;
    padding-left: 8px;
}
.more { margin-top: 26px; }
.arrow-r {
    display: inline-block;
    border-top: 4px solid transparent;
    border-bottom: 4px solid transparent;
    border-left: 4px solid #555;
}
.more .arrow-r { margin-left: 17px; }
.arrow-l {
    display: inline-block;
    border-top: 4px solid transparent;
    border-bottom: 4px solid transparent;
    border-right: 4px solid #666;
}
.stencil {
    width: 245px;
    height: 24px;
    margin: 2px 0 0 6px;
    padding-left: 2px;
    background: #c0cff0;
    line-height: 24px;
    font-weight: 700;
    letter-spacing: .2px;
    word-spacing: 1px;
}
.rule {
    width: 245px;
    height: 1px;
    margin: 6px 0 0 6px;
    background: #dcdcdc;
}
.rule.short {
    width: 179px;
    margin: 6px 0 0 32px;
}
.masters {
    display: grid;
    grid-template-columns: 113px 110px;
    margin-left: 9px;
}
.masters.first-row {
    margin-top: 11px;
    grid-auto-rows: 37px;
}
.masters:not(.first-row) {
    grid-auto-rows: 41.300px;
    margin-top: 5px;
}
.master {
    display: flex;
    align-items: center;
    gap: 5px;
    padding-left: 3px;
}
.master svg { width: 26px; }
.master.selected {
    width: 109px;
    background: #c0cff0;
}
.two-line {
    width: 74px;
    line-height: 16px;
}

/* work area */
.workarea {
    display: grid;
    width: 1348px;
    flex: none;
    grid-template-columns: 19px 1307px 16px 6px;
    grid-template-rows: 16px 16px 770px 15px 39px;
    background: #e9e9e9;
}
.top-gap {
    grid-column: 1 / -1;
    grid-row: 1;
}
.ruler-corner {
    grid-column: 1;
    grid-row: 2;
    display: flex;
    align-items: center;
    justify-content: center;
    padding-left: 3px;
    border-right: 1px solid #999;
    border-bottom: 1px solid #aaa;
}
.h-ruler {
    grid-column: 2;
    grid-row: 2;
    display: flex;
    padding-left: 19px;
    overflow: hidden;
    border-bottom: 1px solid #aaa;
}
.h-ruler span {
    flex: none;
    width: 46.100px;
    padding-left: 2px;
    font-size: 10px;
    line-height: 15px;
    color: #333;
    background:
        linear-gradient(#999, #999) 0 0 / 1px 100% no-repeat,
        linear-gradient(#999, #999) 23px 4px / 1px 100% no-repeat;
}
.v-scroll {
    display: flex;
    grid-column: 3;
    grid-row: 1 / 4;
    position: relative;
    flex-direction: column;
    align-items: center;
    justify-content: space-between;
    padding: 18px 0 2px 1px;
    background: linear-gradient(#dfdfdf, #dfdfdf) 0 32px no-repeat;
}
.sb-btn {
    display: flex;
    align-items: center;
    justify-content: center;
    flex: none;
    width: 15px;
    height: 15px;
    background: #fff;
    border: 1px solid #aaa;
}
.v-thumb {
    position: absolute;
    top: 254px;
    left: 1px;
    width: 14px;
    height: 36px;
    background: #fff;
    border: 1px solid #aaa;
}
.v-ruler {
    grid-column: 1;
    grid-row: 3;
    overflow: hidden;
    border-right: 1px solid #999;
}
.v-ruler span {
    display: block;
    height: 46px;
    padding: 2px 0 0 4px;
    background:
        linear-gradient(#999, #999) 4px 0 / 15px 1px no-repeat,
        linear-gradient(#999, #999) 4px 23px / 15px 1px no-repeat;
}
.v-ruler span:first-child {
    margin-top: -13px;
}
.v-ruler b {
    display: block;
    height: 16px;
    writing-mode: vertical-rl;
    transform: rotate(180deg);
    font-weight: 400;
    font-size: 10px;
    line-height: 10px;
    color: #333;
}
.canvas {
    grid-column: 2;
    grid-row: 3;
    background: #fff;
    overflow: hidden;
}
.start-text {
    font-family: "Liberation Serif", serif;
    font-size: 126px;
    fill: #111;
}
.s-text {
    font-family: "Liberation Serif", serif;
    font-style: italic;
    font-size: 90px;
    fill: #111;
    stroke: #111;
    stroke-width: 1;
}
.handles circle {
    fill: #6e9bff;
    stroke: #fff;
    stroke-width: 1;
}
.h-scroll {
    display: flex;
    grid-column: 1 / 3;
    grid-row: 4;
    padding-left: 6px;
}
.h-track {
    position: relative;
    flex: none;
    width: 1289px;
    background: #dfdfdf;
}
.h-thumb {
    position: absolute;
    left: 473px;
    top: 1px;
    width: 63px;
    height: 13px;
    background: #fff;
    border: 1px solid #aaa;
}
.sb-btn.right {
    margin-left: 2px;
}
.pages {
    grid-column: 1 / -1;
    grid-row: 5;
    display: flex;
    align-items: center;
    padding: 0 0 0 23px;
}
.page-name {
    width: 45px;
    font-weight: 700;
    color: #3955a3;
}
.page-sep {
    width: 1px;
    height: 16px;
    background: #ddd;
}
.page-all {
    display: flex;
    align-items: center;
    gap: 3px;
    width: 67px;
    padding-left: 15px;
}
.tri-up {
    border-left: 4px solid transparent;
    border-right: 4px solid transparent;
    border-bottom: 5px solid #3955a3;
}
.page-add {
    margin-left: 10px;
}

/* format pane */
.format {
    flex: none;
    width: 313px;
    background: #e5e5e5;
    border-left: 1px solid #c8c8c8;
}
.format-head {
    display: flex;
    align-items: center;
    height: 51px;
    padding: 0 19px 0 14px;
}
.format-head h2 {
    flex: 1;
    font-size: 20.500px;
    color: #3955a3;
}
.caret.big-c {
    margin: -6px 32px 0 0;
    border-left-width: 4px;
    border-right-width: 4px;
    border-top-width: 5px;
    border-top-color: #777;
}
.format-head svg { margin-top: -6px; }
.format-icons {
    display: flex;
    align-items: center;
    gap: 18px;
    height: 26px;
    padding-left: 19px;
}
.format-rule {
    position: relative;
    width: 285px;
    height: 1px;
    margin: 15px 0 0 13px;
    background: #bdbdbd;
}
.format-rule i {
    position: absolute;
    left: 12px;
    top: -4px;
    width: 8px;
    height: 8px;
    transform: rotate(45deg);
    background: #e5e5e5;
    border-top: 1px solid #bdbdbd;
    border-left: 1px solid #bdbdbd;
}
.section-row {
    display: flex;
    align-items: center;
    height: 27px;
    padding-left: 21px;
}
.section-row b {
    margin-left: 8px;
    color: #444;
}
.section-row.open b { color: #3955a3; }
.tri-closed {
    width: 0;
    height: 0;
    border-top: 4px solid transparent;
    border-bottom: 4px solid transparent;
    border-left: 5px solid #888;
}
.tri-open {
    width: 0;
    height: 0;
    border-left: 5px solid transparent;
    border-bottom: 5px solid #444;
}
.radios {
    padding: 5px 0 0 36px;
}
.radio {
    display: flex;
    align-items: center;
    height: 25px;
    font-size: 11.500px;
    color: #555;
}
.radio i {
    width: 12px;
    height: 12px;
    margin-right: 5px;
    background: #fff;
    border: 1px solid #aaa;
    border-radius: 50%;
}
.radio.checked i {
    background: radial-gradient(circle, #666 0 3px, #fff 3.500px);
}
.radio-rule {
    width: 243px;
    height: 1px;
    margin: 4px 0 0 35px;
    background: #dcdcdc;
}
.props {
    padding: 5px 33px 0 45px;
}
.prop {
    display: flex;
    align-items: center;
    justify-content: space-between;
    height: 31.950px;
    color: #555;
}
.pick {
    display: flex;
    align-items: center;
    justify-content: space-between;
    width: 44px;
    height: 27px;
    padding: 0 7px 0 8px;
    background: #fff;
    border: 1px solid #aaa;
}
.pick .caret {
    border-left-width: 4px;
    border-right-width: 4px;
    border-top-width: 4px;
}
.spin {
    display: flex;
    align-items: center;
    justify-content: space-between;
    height: 26px;
    padding: 0 5px 0 6px;
    background: #fff;
    border: 1px solid #aaa;
    color: #555;
}
.spin em {
    color: #555;
}
.w-spin { width: 103px; }
.w-radius { width: 94px; }
.spin-btns {
    display: flex;
    flex-direction: column;
    gap: 6px;
}
.spin-btns .caret {
    border-left-width: 4px;
    border-right-width: 4px;
}
.spin-btns .caret:not(.up-c) { border-top-width: 4px; }
.slider {
    position: relative;
    width: 63px;
    height: 1px;
    margin: 0 6px 0 auto;
    background: #999;
}
.slider i {
    position: absolute;
    left: 0;
    top: -4px;
    width: 2px;
    height: 9px;
    background: #777;
}
.combo-sm {
    display: flex;
    align-items: center;
    justify-content: space-between;
    width: 67px;
    height: 23px;
    padding: 0 7px 0 6px;
    background: #fff;
    border: 1px solid #aaa;
    color: #444;
}
.combo-sm.narrow { width: 52px; }
.combo-sm .caret {
    border-left-width: 4px;
    border-right-width: 4px;
    border-top-width: 4px;
}

/* status */
.status {
    display: flex;
    align-items: center;
    height: 22px;
    padding-left: 8px;
    background: #f3f3f3;
    border-top: 1px solid #c8c8c8;
    font-size: 11.500px;
    color: #555;
}
.st-page { width: 64px; }
.st-w { width: 105px; }
.st-h { width: 111px; }
.st-a { width: 85px; }
.st-l { width: 75px; }
.st-right {
    display: flex;
    align-items: center;
    margin-left: auto;
    padding-right: 10px;
}
.zoom-minus {
    width: 6px;
    height: 2px;
    margin: 0 4px 0 21px;
    background: #666;
}
.zoom-track {
    position: relative;
    width: 98px;
    height: 1px;
    margin-right: 7px;
    background: #999;
}
.zoom-tick {
    position: absolute;
    left: 50px;
    top: -2px;
    width: 1px;
    height: 5px;
    background: #999;
}
.zoom-thumb {
    position: absolute;
    left: 94px;
    top: -5px;
    width: 5px;
    height: 11px;
    background: #666;
}
.zoom-val {
    margin-left: 8px;
    width: 53px;
    font-size: 12px;
}
.st-pan { margin-left: 13px; }
.desktop-strip {
    display: flex;
    height: 8px;
    overflow: hidden;
    background: linear-gradient(90deg, #d9d6dd, #dcd5d8 20%, #d6d6e0 50%, #d6d4de 80%, #d4d8da);
    position: relative;
}
.strip-gap {
    width: 45px;
    margin-left: 343px;
    background: #eceaec;
}
.strip-text {
    margin-left: auto;
    margin-right: 25px;
    font-size: 12px;
    line-height: 14px;
    color: #333;
}
```
